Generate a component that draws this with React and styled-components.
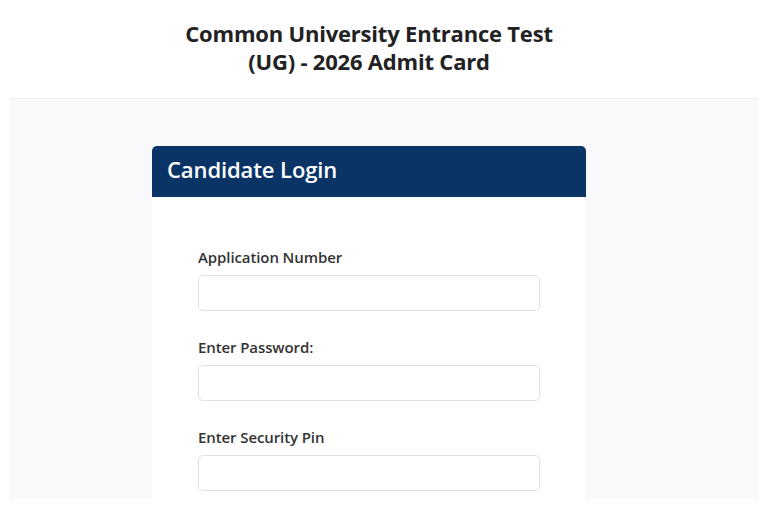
import React from "react";
import styled, { createGlobalStyle } from "styled-components";

const Global = createGlobalStyle`
  html, body {
    margin: 0;
    padding: 0;
    background: #ffffff;
  }
  body {
    font-family: "Open Sans", "Noto Sans", sans-serif;
    color: #212529;
  }
`;

const Page = styled.div`
  width: 768px;
  height: 510px;
  overflow: hidden;
  display: flex;
  flex-direction: column;
`;

const TitleBar = styled.header`
  height: 98px;
  display: flex;
  align-items: center;
  justify-content: center;
  padding: 0 30px 4px 0;
  box-sizing: border-box;
`;

const Title = styled.h1`
  margin: 0;
  font-size: 22px;
  line-height: 28px;
  font-weight: 700;
  text-align: center;
  color: #222;
  letter-spacing: -0.2px;
`;

const Section = styled.section`
  margin: 0 10px;
  height: 401px;
  background: #f8f9fa;
  border-top: 1px solid #eef0f2;
  padding: 47px 0 0 142px;
  box-sizing: border-box;
  overflow: hidden;
  display: flex;
  justify-content: flex-start;
`;

const Card = styled.div`
  width: 434px;
  background: #ffffff;
  border-radius: 5px 5px 0 0;
  display: flex;
  flex-direction: column;
  height: 420px;
`;

const CardHeader = styled.div`
  background: #0a3466;
  height: 51px;
  border-radius: 5px 5px 0 0;
  display: flex;
  align-items: center;
  padding: 0 15px 6px;
  box-sizing: border-box;
`;

const CardTitle = styled.h2`
  margin: 0;
  color: #ffffff;
  font-size: 22px;
  font-weight: 600;
  letter-spacing: -0.1px;
`;

const Form = styled.form`
  padding: 50px 46px 0;
  display: flex;
  flex-direction: column;
  gap: 26px;
`;

const Field = styled.div`
  display: flex;
  flex-direction: column;
  gap: 8px;
`;

const Label = styled.label`
  font-size: 15px;
  line-height: 20px;
  font-weight: 600;
  color: #333;
  letter-spacing: -0.1px;
`;

const Input = styled.input`
  width: 342px;
  height: 36px;
  box-sizing: border-box;
  border: 1px solid #dee2e6;
  border-radius: 5px;
  background: #fff;
  padding: 0 12px;
  font-family: inherit;
  font-size: 14px;
  outline: none;
`;

const fields = [
  { id: "appno", label: "Application Number", type: "text" },
  { id: "pwd", label: "Enter Password:", type: "password" },
  { id: "pin", label: "Enter Security Pin", type: "text" },
];

export default function App() {
  return (
    <>
      <Global />
      <Page>
        <TitleBar>
          <Title>
            Common University Entrance Test
            <br />
            (UG) - 2026 Admit Card
          </Title>
        </TitleBar>
        <Section>
          <Card>
            <CardHeader>
              <CardTitle>Candidate Login</CardTitle>
            </CardHeader>
            <Form>
              {fields.map((f) => (
                <Field key={f.id}>
                  <Label htmlFor={f.id}>{f.label}</Label>
                  <Input id={f.id} type={f.type} />
                </Field>
              ))}
            </Form>
          </Card>
        </Section>
      </Page>
    </>
  );
}
